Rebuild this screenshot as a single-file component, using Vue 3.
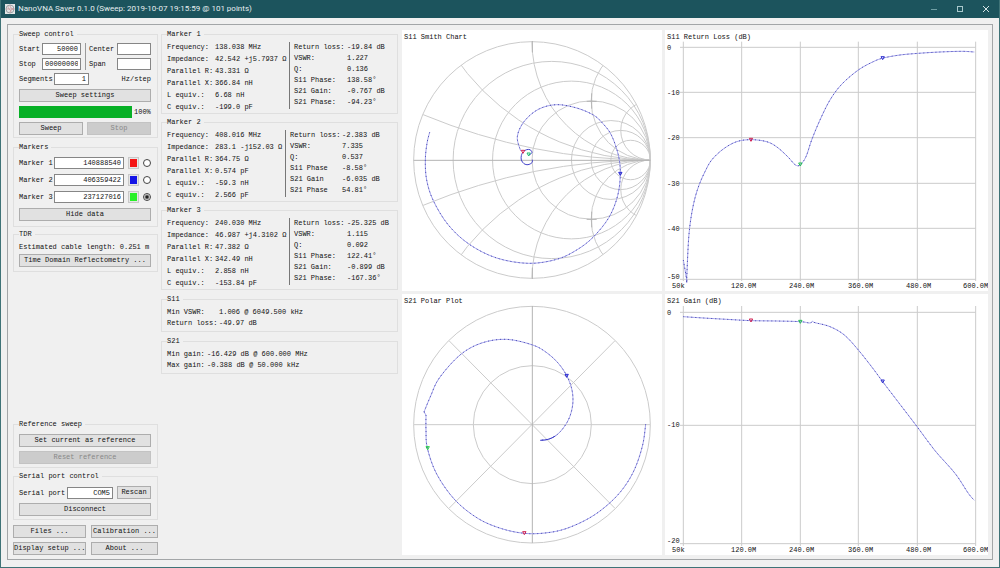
<script setup>
import { ref } from 'vue'

const start = ref('50000')
const stop = ref('00000000')
const center = ref('')
const span = ref('')
const segments = ref('1')
const port = ref('COM5')
const active = ref(3)

const markers = ref([
  { id: 1, value: '140888540', color: '#f41414' },
  { id: 2, value: '406359422', color: '#1414e6' },
  { id: 3, value: '237127016', color: '#28f028' }
])

const readouts = [
  {
    title: 'Marker 1',
    left: [['Frequency:', '138.038 MHz'], ['Impedance:', '42.542 +j5.7937 Ω'], ['Parallel R:', '43.331 Ω'], ['Parallel X:', '366.84 nH'], ['L equiv.:', '6.68 nH'], ['C equiv.:', '-199.0 pF']],
    right: [['Return loss:', '-19.84 dB'], ['VSWR:', '1.227'], ['Q:', '0.136'], ['S11 Phase:', '138.58°'], ['S21 Gain:', '-0.767 dB'], ['S21 Phase:', '-94.23°']]
  },
  {
    title: 'Marker 2',
    narrow: true,
    left: [['Frequency:', '408.016 MHz'], ['Impedance:', '283.1 -j152.03 Ω'], ['Parallel R:', '364.75 Ω'], ['Parallel X:', '0.574 pF'], ['L equiv.:', '-59.3 nH'], ['C equiv.:', '2.566 pF']],
    right: [['Return loss:', '-2.383 dB'], ['VSWR:', '7.335'], ['Q:', '0.537'], ['S11 Phase', '-8.58°'], ['S21 Gain', '-6.035 dB'], ['S21 Phase', '54.81°']]
  },
  {
    title: 'Marker 3',
    left: [['Frequency:', '240.030 MHz'], ['Impedance:', '46.987 +j4.3102 Ω'], ['Parallel R:', '47.382 Ω'], ['Parallel X:', '342.49 nH'], ['L equiv.:', '2.858 nH'], ['C equiv.:', '-153.84 pF']],
    right: [['Return loss:', '-25.325 dB'], ['VSWR:', '1.115'], ['Q:', '0.092'], ['S11 Phase:', '122.41°'], ['S21 Gain:', '-0.899 dB'], ['S21 Phase:', '-167.36°']]
  }
]

// Smooth curve through the sample points (Catmull-Rom to cubic Bezier)
function curve(p) {
  let d = `M${p[0][0]} ${p[0][1]}`
  for (let i = 0; i < p.length - 1; i++) {
    const a = p[i - 1] || p[i]
    const b = p[i]
    const c = p[i + 1]
    const e = p[i + 2] || c
    d += `C${b[0] + (c[0] - a[0]) / 6} ${b[1] + (c[1] - a[1]) / 6} ${c[0] - (e[0] - b[0]) / 6} ${c[1] - (e[1] - b[1]) / 6} ${c[0]} ${c[1]}`
  }
  return d
}

const R = 355
const CX = 396
const CY = 405
const resistance = [0.2, 0.5, 1, 2, 3, 5].map(r => ({ cx: CX + (R * r) / (1 + r), r: R / (1 + r) }))
const reactance = [0.2, 0.5, 1, 2, 4].flatMap(x => [
  { cy: CY - R / x, r: R / x },
  { cy: CY + R / x, r: R / x }
])

const smithTrace = curve([[89, 322], [81, 355], [76, 405], [80, 465], [100, 527], [145, 600], [208, 658], [290, 699], [386, 715], [470, 703], [530, 675], [580, 636], [627, 577], [653, 512], [661, 447], [655, 390], [634, 330], [608, 295], [580, 270], [530, 249], [470, 239], [415, 253], [372, 290], [352, 335], [362, 378]])
const smithLoop = curve([[368, 382], [364, 392], [364, 405], [372, 416], [384, 419], [396, 413], [397, 404]]) + curve([[372, 378], [380, 374], [390, 374], [396, 382], [391, 388], [386, 390]])
const polarTrace = curve([[737, 403], [728, 465], [705, 535], [672, 592], [628, 640], [570, 683], [498, 716], [435, 729], [373, 730], [305, 716], [235, 686], [165, 630], [110, 552], [82, 474], [78, 420], [78, 375]]) + 'L72 366' + curve([[72, 366], [92, 318], [118, 264], [180, 195], [245, 159], [320, 148], [398, 165], [440, 188], [475, 220], [500, 257], [516, 300], [518, 345], [505, 390], [478, 428], [450, 446], [421, 451]])
const lossTrace = curve([[70, 705], [80, 763], [80, 763], [85, 655], [90, 600], [97, 555], [106, 515], [118, 478], [135, 440], [155, 405], [190, 372], [230, 350], [273, 344], [320, 350], [352, 367], [385, 397], [405, 419], [420, 420], [438, 395], [455, 345], [480, 285], [510, 225], [545, 178], [595, 135], [640, 110], [670, 99], [720, 90], [775, 85], [840, 81], [905, 79], [943, 81]])
const gainTrace = curve([[70, 80], [130, 84], [200, 88], [273, 92], [350, 93], [421, 95], [450, 99], [457, 94], [465, 98], [510, 110], [553, 135], [595, 180], [640, 237], [668, 275], [720, 343], [772, 411], [825, 482], [885, 550], [925, 610], [943, 631]])

const ticks = [['50k', 7], ['120.0M', 66], ['240.0M', 124], ['360.0M', 183], ['480.0M', 241], ['600.0M', 298]]
const gridX = [70, 245, 421, 595, 772, 947]
const linear = [
  {
    title: 'S11 Return Loss (dB)', trace: lossTrace, shift: 'translate(-15 -15)',
    rows: [67, 202, 338, 475, 610, 763], top: 50,
    labels: [['0', 20], ['-10', 65], ['-20', 110], ['-30', 156], ['-40', 201], ['-50', 249]],
    marks: [[273, 345, '#d02050'], [421, 419, '#20c050'], [668, 100, '#3030d0']],
    tickY: 258
  },
  {
    title: 'S21 Gain (dB)', trace: gainTrace, shift: 'translate(-15 -12)',
    rows: [67, 406, 761], top: 48,
    labels: [['0', 21], ['-10', 133], ['-20', 249]],
    marks: [[273, 92, '#d02050'], [421, 96, '#20c050'], [668, 275, '#3030d0']],
    tickY: 258
  }
]
const smithMarks = [[369, 381, '#d02050'], [386, 389, '#20c070'], [661, 447, '#2020d0']]
const polarMarks = [[373, 730, '#d02050'], [83, 475, '#20d040'], [500, 258, '#2020d0']]
const tri = m => `M${m[0] - 5} ${m[1] - 5}h10l-5 9z`
</script>

<template>
  <div class="window">
    <header class="titlebar">
      <svg class="logo" viewBox="0 0 10 10" aria-hidden="true">
        <rect width="10" height="10" fill="#e3e6e6" />
        <circle cx="5" cy="5" r="4" fill="none" stroke="#9aa5a8" />
        <path d="M1 5h8M5 1c0 3 2 4 4 4M5 9c0-3 2-4 4-4M3 2c0 4 3 3 3 6" fill="none" stroke="#c18f94" stroke-width=".7" />
      </svg>
      <h1>NanoVNA Saver 0.1.0 (Sweep: 2019-10-07 19:15:59 @ 101 points)</h1>
      <div class="winbtns">
        <button type="button" aria-label="Minimize"><svg viewBox="0 0 8 8"><path d="M1 4.5h6" stroke="#6f9ea3" /></svg></button>
        <button type="button" aria-label="Maximize"><svg viewBox="0 0 8 8"><rect x="1.5" y="1.5" width="5" height="5" fill="none" stroke="#a9c8cc" /></svg></button>
        <button type="button" aria-label="Close"><svg viewBox="0 0 8 8"><path d="M1 1l6 6M7 1l-6 6" stroke="#d5e4e6" /></svg></button>
      </div>
    </header>

    <main>
      <div class="frame">
        <div class="controls">
          <fieldset class="sweep">
            <legend>Sweep control</legend>
            <div class="limits">
              <div class="pair">
                <label for="start">Start</label><input id="start" v-model="start">
                <label for="stop">Stop</label><input id="stop" v-model="stop">
              </div>
              <div class="pair second">
                <label for="center">Center</label><input id="center" v-model="center">
                <label for="span">Span</label><input id="span" v-model="span">
              </div>
            </div>
            <div class="row segs">
              <label for="segments">Segments</label><input id="segments" v-model="segments"><span>Hz/step</span>
            </div>
            <button type="button" class="btn gap">Sweep settings</button>
            <div class="row gap">
              <div class="bar" role="progressbar" aria-label="Sweep progress" aria-valuenow="100"></div>
              <span class="pct">100%</span>
            </div>
            <div class="row gap two">
              <button type="button" class="btn">Sweep</button>
              <button type="button" class="btn" disabled>Stop</button>
            </div>
          </fieldset>

          <fieldset class="markers">
            <legend>Markers</legend>
            <div v-for="m in markers" :key="m.id" class="row mk">
              <label :for="'m' + m.id">Marker {{ m.id }}</label>
              <input :id="'m' + m.id" v-model="m.value">
              <button type="button" class="swatch" :aria-label="'Marker ' + m.id + ' colour'"><i :style="{ background: m.color }"></i></button>
              <input v-model="active" type="radio" name="active" :value="m.id" :aria-label="'Use marker ' + m.id">
            </div>
            <button type="button" class="btn">Hide data</button>
          </fieldset>

          <fieldset class="tdr">
            <legend>TDR</legend>
            <p>Estimated cable length: 0.251 m</p>
            <button type="button" class="btn">Time Domain Reflectometry ...</button>
          </fieldset>

          <fieldset class="reference">
            <legend>Reference sweep</legend>
            <button type="button" class="btn">Set current as reference</button>
            <button type="button" class="btn" disabled>Reset reference</button>
          </fieldset>

          <fieldset class="serial">
            <legend>Serial port control</legend>
            <div class="row">
              <label for="port">Serial port</label><input id="port" v-model="port"><button type="button" class="btn">Rescan</button>
            </div>
            <button type="button" class="btn gap">Disconnect</button>
          </fieldset>

          <div class="dialogs">
            <button type="button" class="btn">Files ...</button>
            <button type="button" class="btn">Calibration ...</button>
            <button type="button" class="btn">Display setup ...</button>
            <button type="button" class="btn">About ...</button>
          </div>
        </div>

        <div class="data">
          <fieldset v-for="r in readouts" :key="r.title" class="readout" :class="{ narrow: r.narrow }">
            <legend>{{ r.title }}</legend>
            <dl class="left">
              <template v-for="v in r.left" :key="v[0]"><dt>{{ v[0] }}</dt><dd>{{ v[1] }}</dd></template>
            </dl>
            <dl class="right">
              <template v-for="v in r.right" :key="v[0]"><dt>{{ v[0] }}</dt><dd>{{ v[1] }}</dd></template>
            </dl>
          </fieldset>
          <fieldset class="summary s11">
            <legend>S11</legend>
            <dl>
              <dt>Min VSWR:</dt><dd>1.006 @ 6049.500 kHz</dd>
              <dt>Return loss:</dt><dd>-49.97 dB</dd>
            </dl>
          </fieldset>
          <fieldset class="summary s21">
            <legend>S21</legend>
            <dl>
              <dt>Min gain:</dt><dd>-16.429 dB @ 600.000 MHz</dd>
              <dt>Max gain:</dt><dd>-0.388 dB @ 50.000 kHz</dd>
            </dl>
          </fieldset>
        </div>

        <div class="charts">
          <svg class="chart" viewBox="0 0 260 261" role="img" aria-label="S11 Smith Chart">
            <defs><clipPath id="unit"><circle :cx="CX" :cy="CY" :r="R" /></clipPath></defs>
            <text x="2" y="9">S11 Smith Chart</text>
            <g transform="scale(.33333) translate(-6 -15)">
              <g class="grid">
                <circle :cx="CX" :cy="CY" :r="R" />
                <circle v-for="c in resistance" :key="c.r" :cx="c.cx" :cy="CY" :r="c.r" />
                <g clip-path="url(#unit)">
                  <circle v-for="c in reactance" :key="c.cy" :cx="CX + R" :cy="c.cy" :r="c.r" />
                </g>
                <path class="strong" d="M41 406H751M397 48v34M397 728v34M575 205v46M575 560v47M560 229h30M560 583h30" />
              </g>
              <path class="trace" :d="smithTrace" /><path class="dots" :d="smithTrace" />
              <path class="trace dense" :d="smithLoop" />
              <path v-for="m in smithMarks" :key="m[2]" class="mark" :d="tri(m)" :stroke="m[2]" />
            </g>
          </svg>

          <svg v-for="(c, i) in linear" :key="c.title" class="chart" :class="'lin' + i" viewBox="0 0 323 261" role="img" :aria-label="c.title">
            <text x="2" y="9">{{ c.title }}</text>
            <g :transform="'scale(.33333) ' + c.shift">
              <g class="grid">
                <path v-for="x in gridX" :key="x" :d="`M${x} ${c.top}V768`" />
                <path v-for="y in c.rows" :key="y" :d="`M60 ${y}H947`" />
              </g>
              <path class="trace" :d="c.trace" /><path class="dots" :d="c.trace" />
              <path v-for="m in c.marks" :key="m[2]" class="mark" :d="tri(m)" :stroke="m[2]" />
            </g>
            <text v-for="l in c.labels" :key="l[0]" x="2" :y="l[1]">{{ l[0] }}</text>
            <text v-for="t in ticks" :key="t[0]" :x="t[1]" :y="c.tickY">{{ t[0] }}</text>
          </svg>

          <svg class="chart polar" viewBox="0 0 260 261" role="img" aria-label="S21 Polar Plot">
            <text x="2" y="9">S21 Polar Plot</text>
            <g transform="scale(.33333) translate(-6 -12)">
              <g class="grid">
                <circle cx="396" cy="404" r="355" /><circle cx="397" cy="404" r="177" />
                <path d="M41 404H751M147 152L645 655M645 152L147 655" />
                <path class="strong" d="M397 48V759" />
              </g>
              <path class="trace" :d="polarTrace" /><path class="dots" :d="polarTrace" />
              <path class="trace dense" d="M421 451C440 451 452 447 466 438" />
              <path v-for="m in polarMarks" :key="m[2]" class="mark" :d="tri(m)" :stroke="m[2]" />
            </g>
          </svg>
        </div>
      </div>
    </main>
  </div>
</template>

<style>
html, body { margin: 0; background: #f0f0f0; }
</style>

<style scoped>
* { box-sizing: border-box; }
.window {
  min-height: 100vh;
  display: flex;
  flex-direction: column;
  border: 1px solid #3f7377;
  border-top: 0;
  background: #f0f0f0;
  color: #111;
  font: 7px/10px "Liberation Mono", "DejaVu Sans Mono", monospace;
}
.titlebar {
  display: flex;
  align-items: center;
  height: 18px;
  padding: 0 4px;
  background: #1c545d;
}
.logo { width: 10px; height: 10px; margin-right: 3px; }
h1 { margin: 0; flex: 1; color: #e6eff0; font: 400 8px/10px Roboto, "Noto Sans", sans-serif; }
.winbtns { display: flex; gap: 18px; padding-right: 5px; }
.winbtns button { width: 8px; height: 8px; padding: 0; border: 0; background: none; }
.winbtns svg { display: block; width: 8px; height: 8px; }

main { flex: 1; display: flex; padding: 6px 6px 7px; }
.frame {
  flex: 1;
  display: flex;
  padding: 5px 4px 4px 5px;
  border: 1px solid #a3a6a8;
}
.controls { width: 145px; margin-right: 3px; display: flex; flex-direction: column; }
.data { width: 237px; margin-right: 4px; }
.charts {
  flex: 1;
  display: grid;
  grid-template-columns: 260fr 323fr;
  gap: 3px;
  align-content: start;
}
.chart { display: block; width: 100%; background: #fff; }
.polar { grid-column: 1; grid-row: 2; }
.lin1 { grid-column: 2; grid-row: 2; }

fieldset { min-width: 0; margin: 0; padding: 0 6px 0 5px; border: 1px solid #dfdfdf; }
legend { padding: 0 3px 0 0; line-height: 8px; }
input, button { font: inherit; color: inherit; margin: 0; }
input:not([type="radio"]) {
  min-width: 0;
  height: 12px;
  padding: 0 2px;
  border: 1px solid #868686;
  border-radius: 0;
  background: #fff;
  text-align: right;
}
.btn {
  display: block;
  width: 100%;
  height: 13px;
  padding: 0;
  border: 1px solid #adadad;
  background: #e1e1e1;
  line-height: 11px;
  white-space: nowrap;
}
.btn:disabled { background: #cccccc; border-color: #c3c3c3; color: #888; }
.row { display: flex; align-items: center; }
.gap { margin-top: 4px; }
p { margin: 0; white-space: nowrap; }

.sweep { padding-top: 5px; padding-bottom: 2px; }
.limits { display: flex; }
.pair { flex: 1; display: grid; grid-template-columns: 23px 1fr; gap: 3px 0; align-items: center; padding-right: 4px; }
.pair.second { grid-template-columns: 28px 1fr; padding: 0 0 0 3px; border-left: 1px solid #9a9a9a; }
.segs { margin-top: 3px; }
.segs label { width: 35px; }
.segs input { width: 35px; }
.segs span { margin-left: auto; }
.bar { flex: 1; height: 12px; background: #06b025; }
.pct { width: 19px; padding-left: 2px; }
.two { gap: 4px; }

.markers { margin-top: 5px; padding-top: 6px; padding-bottom: 5px; }
.mk { margin-bottom: 5px; }
.mk label { width: 35px; flex: none; }
.mk input:not([type="radio"]) { flex: 1; }
.swatch { width: 11px; height: 12px; margin: 0 4px; padding: 1px; border: 1px solid #c8c8c8; background: #e6e6e6; }
.swatch i { display: block; height: 8px; }
input[type="radio"] {
  appearance: none;
  width: 8px;
  height: 8px;
  border: 1px solid #444;
  border-radius: 50%;
  background: #fff;
}
input[type="radio"]:checked { background: radial-gradient(circle, #222 1px, #fff 3px); }

.tdr { margin-top: 3px; padding-top: 4px; padding-bottom: 4px; }
.tdr .btn { margin-top: 2px; }

.reference { margin-top: auto; padding-top: 6px; padding-bottom: 3px; }
.reference .btn + .btn { margin-top: 4px; }
.serial { margin-top: 4px; padding-top: 6px; padding-bottom: 3px; }
.serial label { width: 48px; flex: none; }
.serial input { flex: 1; margin-right: 4px; }
.serial .row .btn { width: 34px; }
.dialogs { display: grid; grid-template-columns: 73px 67px; gap: 4px; margin-top: 5px; justify-content: space-between; }

dl, dd { margin: 0; }
dl { display: grid; white-space: nowrap; }
.data .readout { display: grid; grid-template-columns: 122px 1fr; margin-bottom: 4px; padding: 3px 0 0 5px; }
.data .narrow { grid-template-columns: 118px 1fr; }
.left { grid-template-columns: 48px 1fr; line-height: 12px; }
.right {
  grid-template-columns: 53px 1fr;
  align-content: start;
  height: 67px;
  margin-top: 1px;
  padding-left: 4px;
  border-left: 1px solid #777;
  line-height: 11px;
}
.narrow .right { grid-template-columns: 52px 1fr; }
.data .summary { margin-top: 5px; padding: 4px 5px 2px; line-height: 11px; }
.s11 dl { grid-template-columns: 52px 1fr; }
.s21 dl { grid-template-columns: 40px 1fr; }

.chart text { font: 7px "Liberation Mono", "DejaVu Sans Mono", monospace; fill: #111; }
.grid * { fill: none; }
.grid circle, .grid path { stroke: #cbcbcb; stroke-width: 3; }
.grid .strong { stroke: #b4b4b4; }
.trace { fill: none; stroke: #a3a3ea; stroke-width: 3; }
.dense { stroke: #4040c8; }
.dots { fill: none; stroke: #4a4ab4; stroke-width: 3; stroke-dasharray: 3 9; }
.mark { fill: none; stroke-width: 3; }
</style>
